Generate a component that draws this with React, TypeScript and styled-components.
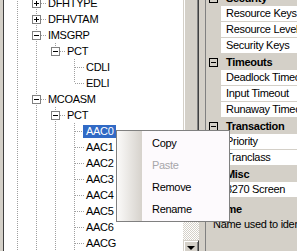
import React from 'react';
import styled, { createGlobalStyle, css } from 'styled-components';

const GlobalStyle = createGlobalStyle`
  html, body { margin: 0; padding: 0; background: #d4d0c8; }
  body { overflow: hidden; font-family: "Liberation Sans", Arial, sans-serif; }
`;

const dotV = 'repeating-linear-gradient(to bottom, #a0a0a0 0 1px, transparent 1px 2px)';
const dotH = 'repeating-linear-gradient(to right, #a0a0a0 0 1px, transparent 1px 2px)';

type Conn = 'I' | ' ' | 'T' | 'L';

interface TreeNode {
  label: string;
  guides: Conn[];
  conn: Conn;
  box?: '+' | '-';
  selected?: boolean;
}

const treeRows: TreeNode[] = [
  { label: 'DFHTYPE', guides: ['I'], conn: 'T', box: '+' },
  { label: 'DFHVTAM', guides: ['I'], conn: 'T', box: '+' },
  { label: 'IMSGRP', guides: ['I'], conn: 'T', box: '-' },
  { label: 'PCT', guides: ['I', 'I'], conn: 'L', box: '-' },
  { label: 'CDLI', guides: ['I', 'I', ' '], conn: 'T' },
  { label: 'EDLI', guides: ['I', 'I', ' '], conn: 'L' },
  { label: 'MCOASM', guides: ['I'], conn: 'T', box: '-' },
  { label: 'PCT', guides: ['I', 'I'], conn: 'T', box: '-' },
  { label: 'AAC0', guides: ['I', 'I', 'I'], conn: 'T', selected: true },
  { label: 'AAC1', guides: ['I', 'I', 'I'], conn: 'T' },
  { label: 'AAC2', guides: ['I', 'I', 'I'], conn: 'T' },
  { label: 'AAC3', guides: ['I', 'I', 'I'], conn: 'T' },
  { label: 'AAC4', guides: ['I', 'I', 'I'], conn: 'T' },
  { label: 'AAC5', guides: ['I', 'I', 'I'], conn: 'T' },
  { label: 'AAC6', guides: ['I', 'I', 'I'], conn: 'T' },
  { label: 'AACG', guides: ['I', 'I', 'I'], conn: 'T' },
];

type GridItem = { kind: 'cat' | 'prop'; label: string };

const gridRows: GridItem[] = [
  { kind: 'cat', label: 'Security' },
  { kind: 'prop', label: 'Resource Keys' },
  { kind: 'prop', label: 'Resource Level' },
  { kind: 'prop', label: 'Security Keys' },
  { kind: 'cat', label: 'Timeouts' },
  { kind: 'prop', label: 'Deadlock Timeout' },
  { kind: 'prop', label: 'Input Timeout' },
  { kind: 'prop', label: 'Runaway Timeout' },
  { kind: 'cat', label: 'Transaction' },
  { kind: 'prop', label: 'Priority' },
  { kind: 'prop', label: 'Tranclass' },
  { kind: 'cat', label: 'Misc' },
  { kind: 'prop', label: '3270 Screen' },
];

const Window = styled.div`
  position: relative;
  display: flex;
  width: 297px;
  height: 251px;
  overflow: hidden;
  background: #d4d0c8;
  font-family: "Liberation Sans", Arial, sans-serif;
  font-size: 11px;
  letter-spacing: -0.3px;
  color: #000;
`;

/* ---------- Tree ---------- */

const TreeFrame = styled.div`
  flex: none;
  display: flex;
  margin-left: 3px;
  border-left: 1px solid #404040;
`;

const TreeView = styled.div`
  width: 179px;
  background: #fff;
  overflow: hidden;
`;

const TreeList = styled.div`
  margin-top: -5px;
  padding-left: 4px;
`;

const TreeRow = styled.div`
  display: flex;
  height: 16px;
  white-space: nowrap;
`;

const Guide = styled.span<{ $kind: Conn }>`
  display: block;
  flex: none;
  width: 19px;
  height: 16px;
  ${({ $kind }) =>
    $kind === 'I'
      ? css`background: ${dotV} 9px 0 / 1px 16px no-repeat;`
      : $kind === 'T'
      ? css`background: ${dotV} 9px 0 / 1px 16px no-repeat, ${dotH} 10px 8px / 9px 1px no-repeat;`
      : $kind === 'L'
      ? css`background: ${dotV} 9px 0 / 1px 8px no-repeat, ${dotH} 10px 8px / 9px 1px no-repeat;`
      : css`background: none;`}
`;

const ExpandBox = styled.span<{ $plus: boolean; $edge: string; $fill: string }>`
  display: block;
  box-sizing: border-box;
  width: 9px;
  height: 9px;
  margin: 4px 0 0 5px;
  border: 1px solid ${({ $edge }) => $edge};
  background: linear-gradient(#000, #000) center / 5px 1px no-repeat,
    ${({ $plus }) => ($plus ? 'linear-gradient(#000, #000) center / 1px 5px no-repeat,' : '')}
    ${({ $fill }) => $fill};
`;

const NodeLabel = styled.span<{ $selected?: boolean }>`
  display: block;
  align-self: flex-start;
  margin: 2px 0 0 -1px;
  padding: 0 2px 0 3px;
  height: 13px;
  line-height: 13px;
  background: ${({ $selected }) => ($selected ? '#316ac5' : 'transparent')};
  color: ${({ $selected }) => ($selected ? '#fff' : '#000')};
`;

const VScroll = styled.div`
  width: 16px;
  display: flex;
  flex-direction: column;
  background: repeating-conic-gradient(#d4d0c8 0 25%, #fff 0 50%) 0 0 / 2px 2px;
`;

const raised = css`
  box-sizing: border-box;
  background-color: #d4d0c8;
  border: 1px solid;
  border-color: #d4d0c8 #404040 #404040 #d4d0c8;
  box-shadow: inset 1px 1px #fff, inset -1px -1px #808080;
`;

const Thumb = styled.div`
  ${raised};
  margin-top: -20px;
  height: 242px;
  flex: none;
`;

const Track = styled.div`
  flex: none;
  height: 18px;
`;

const ArrowButton = styled.div`
  ${raised};
  flex: none;
  height: 16px;
  display: flex;
  justify-content: center;
  padding-top: 5px;
`;

const ArrowDown = styled.span`
  display: block;
  width: 0;
  height: 0;
  border-left: 4px solid transparent;
  border-right: 4px solid transparent;
  border-top: 4px solid #000;
`;

/* ---------- Property grid ---------- */

const PropSide = styled.div`
  flex: 1;
  display: flex;
  padding-left: 6px;
  min-width: 0;
`;

const PropColumn = styled.div`
  flex: 1;
  min-width: 0;
  display: flex;
  flex-direction: column;
  border-left: 1px solid #808080;
`;

const Grid = styled.div`
  height: 198px;
  flex: none;
  overflow: hidden;
`;

const GridList = styled.div`
  margin-top: -10px;
`;

const GridRow = styled.div`
  display: flex;
  height: 16px;
  white-space: nowrap;
`;

const Margin = styled.span`
  display: block;
  flex: none;
  width: 15px;
  height: 16px;
`;

const CatBox = styled(ExpandBox)`
  margin: 4px 0 0 3px;
`;

const CatName = styled.span`
  flex: 1;
  padding-left: 5px;
  line-height: 16px;
  font-weight: bold;
  overflow: hidden;
`;

const PropName = styled.span`
  flex: 1;
  height: 15px;
  padding-left: 5px;
  line-height: 15px;
  background: #fff;
  border-bottom: 1px solid #d4d0c8;
  overflow: hidden;
`;

const Help = styled.div`
  flex: 1;
  padding: 4px 0 0 7px;
  white-space: nowrap;
  overflow: hidden;
`;

const HelpTitle = styled.div`
  font-weight: bold;
  line-height: 14px;
`;

const HelpText = styled.div`
  margin-top: 1px;
  line-height: 14px;
`;

/* ---------- Context menu ---------- */

const Menu = styled.div`
  position: absolute;
  left: 116px;
  top: 130px;
  width: 112px;
  height: 90px;
  display: flex;
  border: 1px solid #808080;
  background: #fdfafd;
`;

const Gutter = styled.div`
  width: 25px;
  flex: none;
  background: linear-gradient(to right, #fbfaf9, #d6d2cc);
`;

const MenuItems = styled.div`
  flex: 1;
  padding: 1px 0;
`;

const MenuItem = styled.div<{ $disabled?: boolean }>`
  height: 22px;
  line-height: 22px;
  padding-left: 10px;
  color: ${({ $disabled }) => ($disabled ? '#a7a6aa' : '#000')};
`;

export default function App() {
  return (
    <>
      <GlobalStyle />
      <Window>
        <TreeFrame>
          <TreeView>
            <TreeList>
              {treeRows.map((n, i) => (
                <TreeRow key={i}>
                  {n.guides.map((g, j) => (
                    <Guide key={j} $kind={g} />
                  ))}
                  <Guide $kind={n.conn}>
                    {n.box && <ExpandBox $plus={n.box === '+'} $edge="#808080" $fill="#fff" />}
                  </Guide>
                  <NodeLabel $selected={n.selected}>{n.label}</NodeLabel>
                </TreeRow>
              ))}
            </TreeList>
          </TreeView>
          <VScroll>
            <Thumb />
            <Track />
            <ArrowButton>
              <ArrowDown />
            </ArrowButton>
          </VScroll>
        </TreeFrame>
        <PropSide>
          <PropColumn>
            <Grid>
              <GridList>
                {gridRows.map((r, i) =>
                  r.kind === 'cat' ? (
                    <GridRow key={i}>
                      <Margin>
                        <CatBox $plus={false} $edge="#000" $fill="#d4d0c8" />
                      </Margin>
                      <CatName>{r.label}</CatName>
                    </GridRow>
                  ) : (
                    <GridRow key={i}>
                      <Margin />
                      <PropName>{r.label}</PropName>
                    </GridRow>
                  )
                )}
              </GridList>
            </Grid>
            <Help>
              <HelpTitle>Name</HelpTitle>
              <HelpText>Name used to identify the transaction</HelpText>
            </Help>
          </PropColumn>
        </PropSide>
        <Menu>
          <Gutter />
          <MenuItems>
            <MenuItem>Copy</MenuItem>
            <MenuItem $disabled>Paste</MenuItem>
            <MenuItem>Remove</MenuItem>
            <MenuItem>Rename</MenuItem>
          </MenuItems>
        </Menu>
      </Window>
    </>
  );
}
